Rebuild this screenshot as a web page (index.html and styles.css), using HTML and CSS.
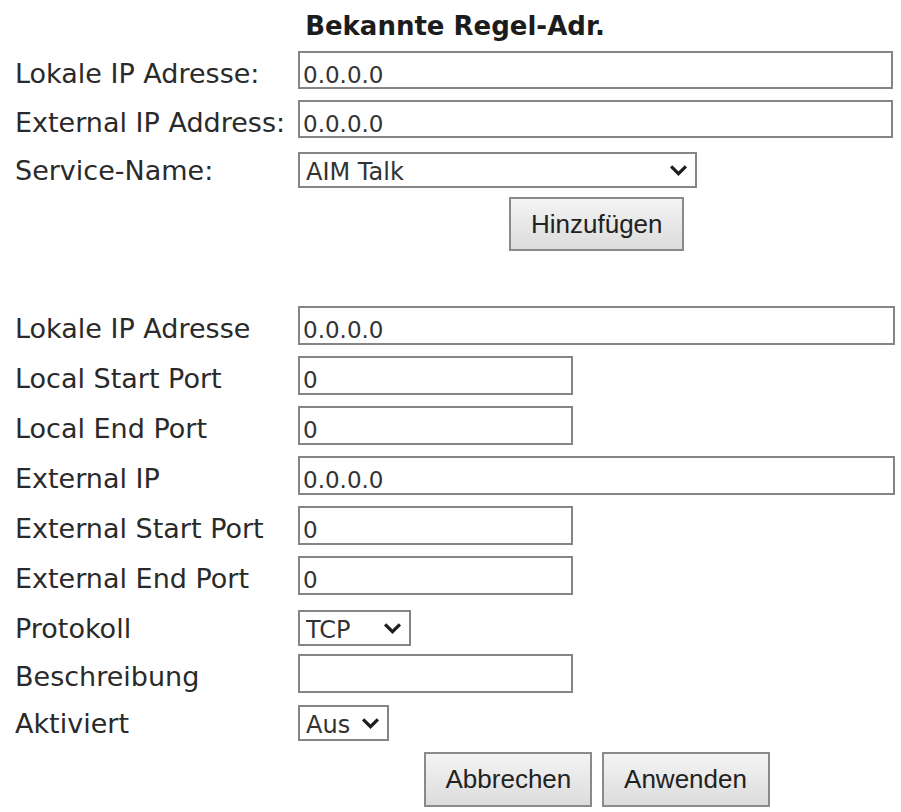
FILE: index.html
```html
<!DOCTYPE html>
<html lang="de">
<head>
    <meta charset="UTF-8">
    <title>Bekannte Regel-Adr.</title>
    <link rel="stylesheet" href="styles.css">
</head>
<body>
<div class="page">
    <h2 class="title">Bekannte Regel-Adr.</h2>

    <form class="rule-form">
        <div class="row">
            <label for="known_local_ip">Lokale IP Adresse:</label>
            <input type="text" class="wide tight" id="known_local_ip" value="0.0.0.0">
        </div>
        <div class="row">
            <label for="known_ext_ip">External IP Address:</label>
            <input type="text" class="wide tight" id="known_ext_ip" value="0.0.0.0">
        </div>
        <div class="row service-row">
            <label for="service_name">Service-Name:</label>
            <div class="select-box service">
                <select id="service_name">
                    <option>AIM Talk</option>
                    <option>FTP</option>
                    <option>HTTP</option>
                </select>
                <svg class="chevron" viewBox="0 0 18 11"><path d="M2 2 L9 9 L16 2" /></svg>
            </div>
        </div>
        <div class="actions first">
            <input type="button" class="btn add" value="Hinzufügen">
        </div>
    </form>

    <form class="rule-form second">
        <div class="row">
            <label for="local_ip">Lokale IP Adresse</label>
            <input type="text" class="wide" id="local_ip" value="0.0.0.0">
        </div>
        <div class="row">
            <label for="local_start">Local Start Port</label>
            <input type="text" class="short" id="local_start" value="0">
        </div>
        <div class="row">
            <label for="local_end">Local End Port</label>
            <input type="text" class="short" id="local_end" value="0">
        </div>
        <div class="row">
            <label for="ext_ip">External IP</label>
            <input type="text" class="wide" id="ext_ip" value="0.0.0.0">
        </div>
        <div class="row">
            <label for="ext_start">External Start Port</label>
            <input type="text" class="short" id="ext_start" value="0">
        </div>
        <div class="row">
            <label for="ext_end">External End Port</label>
            <input type="text" class="short" id="ext_end" value="0">
        </div>
        <div class="row proto-row">
            <label for="protocol">Protokoll</label>
            <div class="select-box proto">
                <select id="protocol">
                    <option>TCP</option>
                    <option>UDP</option>
                </select>
                <svg class="chevron" viewBox="0 0 18 11"><path d="M2 2 L9 9 L16 2" /></svg>
            </div>
        </div>
        <div class="row">
            <label for="description">Beschreibung</label>
            <input type="text" class="short" id="description" value="">
        </div>
        <div class="row select-row">
            <label for="enabled">Aktiviert</label>
            <div class="select-box state">
                <select id="enabled">
                    <option>Aus</option>
                    <option>Ein</option>
                </select>
                <svg class="chevron" viewBox="0 0 18 11"><path d="M2 2 L9 9 L16 2" /></svg>
            </div>
        </div>
        <div class="actions">
            <input type="button" class="btn" value="Abbrechen">
            <input type="button" class="btn" value="Anwenden">
        </div>
    </form>
</div>
</body>
</html>
```

FILE: styles.css
```css
body {
    margin: 0;
    background: #fff;
    color: #222;
    font-family: "DejaVu Sans", Verdana, sans-serif;
}
.page {
    width: 880px;
    margin-left: 15px;
}
.title {
    margin: 0;
    padding-top: 11px;
    height: 40px;
    font-size: 26px;
    text-align: center;
    color: #1c1c1c;
}
.rule-form {
    margin: 0;
}
.rule-form.second {
    margin-top: 55px;
}
.row {
    display: flex;
    align-items: baseline;
    margin-bottom: 11px;
}
.service-row {
    padding-top: 3px;
}
.select-row {
    padding-top: 1px;
}
.proto-row {
    padding-top: 4px;
    margin-bottom: 8px;
}
.row label {
    width: 283px;
    flex: none;
    font-size: 27px;
    color: #2a2a2a;
}
input[type="text"] {
    height: 39px;
    padding: 9px 3px 0;
    border: 2px solid #858585;
    box-sizing: border-box;
    font-family: "DejaVu Sans", Verdana, sans-serif;
    font-size: 23px;
    color: #333;
    background: #fff;
}
input.tight {
    height: 38px;
}
input.wide {
    width: 597px;
}
input.tight.wide {
    width: 595px;
}
input.short {
    width: 275px;
}
.select-box {
    position: relative;
    display: inline-block;
}
.select-box select {
    -webkit-appearance: none;
    appearance: none;
    width: 100%;
    height: 36px;
    padding: 3px 6px 0;
    border: 2px solid #858585;
    border-radius: 0;
    box-sizing: border-box;
    background: #fff;
    font-family: "DejaVu Sans", Verdana, sans-serif;
    font-size: 24px;
    color: #333;
}
.select-box.service {
    width: 399px;
}
.select-box.proto {
    width: 113px;
}
.select-box.state {
    width: 91px;
}
/* arrow drawn on top of the native select */
.chevron {
    position: absolute;
    right: 9px;
    top: 12px;
    width: 19px;
    height: 12px;
    pointer-events: none;
}
.chevron path {
    fill: none;
    stroke: #1e1e1e;
    stroke-width: 3;
}
.actions {
    display: flex;
    justify-content: center;
    gap: 10px;
    margin-left: 283px;
}
.actions.first {
    margin-top: -2px;
}
.btn {
    height: 55px;
    padding: 0 20px;
    border: 2px solid #8a8a8a;
    background: linear-gradient(#f4f4f4, #dcdcdc);
    font-family: "Liberation Sans", Arial, sans-serif;
    font-size: 26px;
    color: #222;
    cursor: pointer;
}
.btn.add {
    width: 175px;
    height: 54px;
}
.actions .btn:not(.add) {
    width: 168px;
}
```
